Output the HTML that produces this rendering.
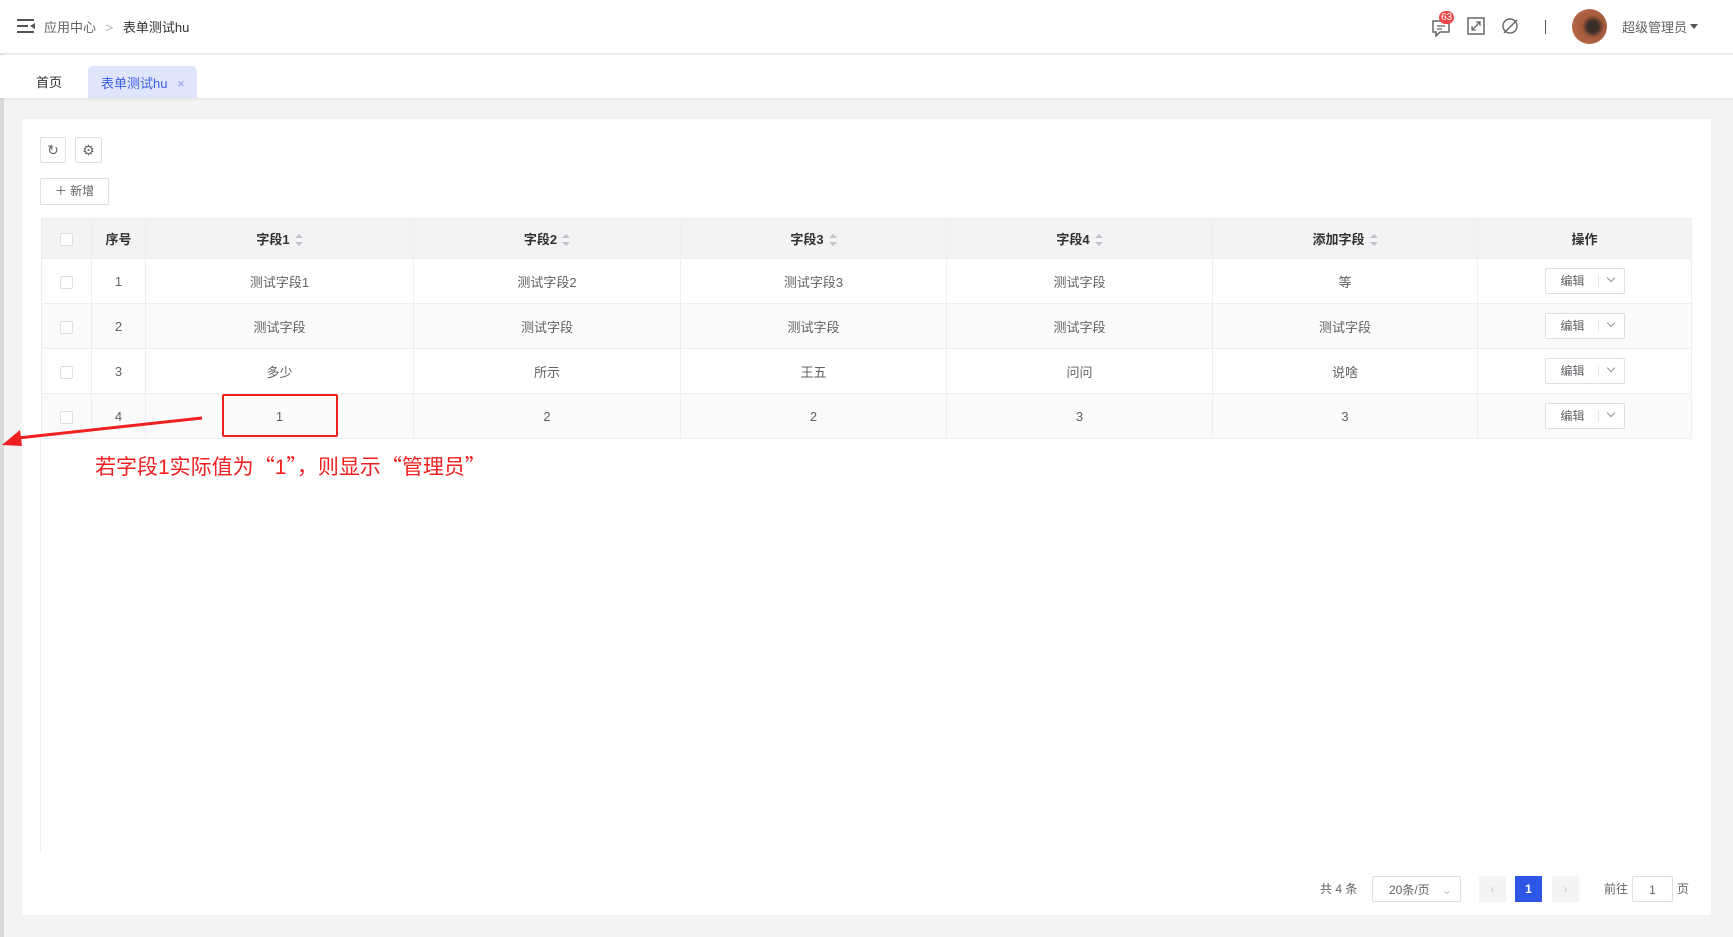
<!DOCTYPE html>
<html><head><meta charset="utf-8"><style>
*{box-sizing:border-box;margin:0;padding:0}
body{width:1733px;height:937px;background:#f3f3f3;font-family:"Liberation Sans","Noto Sans CJK SC",sans-serif;font-size:13px;color:#606266;position:relative;overflow:hidden}
.abs{position:absolute}
.hdr{left:0;top:0;width:1733px;height:54px;background:#fff;border-bottom:1px solid #e6e6e6}
.tabs{left:0;top:55px;width:1733px;height:43px;background:#fff;box-shadow:0 1px 3px rgba(0,0,0,.08)}
.card{left:22px;top:119px;width:1689px;height:796px;background:#fff}
.btn{border:1px solid #dcdfe6;background:#fff;border-radius:2px}
table{border-collapse:collapse;position:absolute;left:41px;top:218px;width:1651px;table-layout:fixed}
td,th{border:1px solid #ebeef5;text-align:center;height:45px;font-weight:normal}
th{background:#f3f3f4;height:40px;color:#303133;font-weight:bold}
tr:nth-child(odd) td{background:#fafafa}
.cb{display:inline-block;width:13px;height:13px;border:1px solid #dcdfe6;background:#fff;border-radius:2px;vertical-align:middle}
.sort{display:inline-block;width:8px;height:12px;vertical-align:middle;margin-left:5px;position:relative;top:-1px}
.sort:before,.sort:after{content:"";position:absolute;left:0;border-left:4px solid transparent;border-right:4px solid transparent}
.sort:before{top:0;border-bottom:4px solid #c0c4cc}
.sort:after{bottom:0;border-top:4px solid #c0c4cc}
.ed{display:inline-block;width:80px;height:26px;border:1px solid #dcdfe6;border-radius:2px;background:#fff;position:relative;vertical-align:middle;text-align:left;font-size:12px;line-height:24px;color:#606266}
.ed span{position:absolute;left:15px}
.ed i{position:absolute;left:52px;top:6px;height:12px;border-left:1px solid #e4e7ed}
.ed b{position:absolute;left:62px;top:6px;width:6px;height:6px;border-right:1px solid #909399;border-bottom:1px solid #909399;transform:rotate(45deg)}
.pg{height:26px;line-height:26px;font-size:12px}
</style></head><body>
<div class="abs" style="left:0;top:0;width:4px;height:937px;background:#d8d8d8"></div>
<div class="abs hdr">
 <svg class="abs" style="left:17px;top:18px" width="19" height="16"><rect x="0" y="1" width="17" height="2" fill="#555"/><rect x="0" y="7" width="11" height="2" fill="#555"/><rect x="0" y="13" width="17" height="2" fill="#555"/><path d="M18 5 L13 8 L18 11Z" fill="#555"/></svg>
 <div class="abs" style="left:44px;top:17px;color:#606266">应用中心 <span style="color:#aaa;margin:0 6px">&gt;</span> <span style="color:#303133">表单测试hu</span></div>
 <svg class="abs" style="left:1431px;top:16px" width="22" height="22"><path d="M2 5h16v11h-9l-4 4v-4h-3z" fill="none" stroke="#666" stroke-width="1.5"/><path d="M6 10h8M6 13h5" stroke="#666" stroke-width="1.3"/></svg>
 <div class="abs" style="left:1439px;top:11px;width:15px;height:13px;border-radius:7px;background:#f04848;color:#fff;font-size:10px;line-height:13px;text-align:center">63</div>
 <svg class="abs" style="left:1467px;top:17px" width="18" height="18"><rect x="1" y="1" width="16" height="16" fill="none" stroke="#666" stroke-width="1.5"/><path d="M5 13l8-8M9 5h4v4M5 9v4h4" fill="none" stroke="#666" stroke-width="1.3"/></svg>
 <svg class="abs" style="left:1501px;top:17px" width="18" height="18"><circle cx="9" cy="9" r="7" fill="none" stroke="#666" stroke-width="1.4"/><path d="M3 16L16 3" stroke="#666" stroke-width="1.4"/></svg>
 <div class="abs" style="left:1545px;top:20px;width:1px;height:14px;background:#555"></div>
 <div class="abs" style="left:1572px;top:9px;width:35px;height:35px;border-radius:50%;background:radial-gradient(circle at 60% 50%,#3a2c28 0 20%,#a55a3c 40%,#c07050)"></div>
 <div class="abs" style="left:1622px;top:17px;color:#606266">超级管理员</div>
 <div class="abs" style="left:1690px;top:24px;border-left:4px solid transparent;border-right:4px solid transparent;border-top:5px solid #555"></div>
</div>
<div class="abs tabs">
 <div class="abs" style="left:36px;top:17px;color:#303133">首页</div>
 <div class="abs" style="left:88px;top:11px;width:109px;height:32px;background:#dfe5fb;border-radius:5px 5px 0 0;color:#3f5fe0;padding:7px 0 0 13px">表单测试hu <span style="color:#8a9ae8;margin-left:6px">×</span></div>
</div>
<div class="abs card"></div>
<div class="abs btn" style="left:40px;top:137px;width:26px;height:26px;text-align:center;line-height:24px;color:#666;font-size:14px">↻</div>
<div class="abs btn" style="left:75px;top:137px;width:27px;height:26px;text-align:center;line-height:24px;color:#666;font-size:14px">⚙</div>
<div class="abs btn" style="left:40px;top:178px;width:69px;height:27px;text-align:center;line-height:25px;font-size:12px;color:#606266">＋ 新增</div>
<div class="abs" style="left:40px;top:438px;width:1px;height:415px;background:#ebeef5"></div>
<table>
<colgroup><col style="width:50px"><col style="width:54px"><col style="width:268px"><col style="width:267px"><col style="width:266px"><col style="width:266px"><col style="width:265px"><col></colgroup>
<tr><th><span class="cb"></span></th><th>序号</th><th>字段1<span class="sort"></span></th><th>字段2<span class="sort"></span></th><th>字段3<span class="sort"></span></th><th>字段4<span class="sort"></span></th><th>添加字段<span class="sort"></span></th><th>操作</th></tr>
<tr><td><span class="cb"></span></td><td>1</td><td>测试字段1</td><td>测试字段2</td><td>测试字段3</td><td>测试字段</td><td>等</td><td><span class="ed"><span>编辑</span><i></i><b></b></span></td></tr>
<tr><td><span class="cb"></span></td><td>2</td><td>测试字段</td><td>测试字段</td><td>测试字段</td><td>测试字段</td><td>测试字段</td><td><span class="ed"><span>编辑</span><i></i><b></b></span></td></tr>
<tr><td><span class="cb"></span></td><td>3</td><td>多少</td><td>所示</td><td>王五</td><td>问问</td><td>说啥</td><td><span class="ed"><span>编辑</span><i></i><b></b></span></td></tr>
<tr><td><span class="cb"></span></td><td>4</td><td>1</td><td>2</td><td>2</td><td>3</td><td>3</td><td><span class="ed"><span>编辑</span><i></i><b></b></span></td></tr>
</table>
<div class="abs" style="left:222px;top:394px;width:116px;height:43px;border:2px solid #f02020;border-radius:2px"></div>
<svg class="abs" style="left:0;top:405px" width="210" height="50"><path d="M202 13 L18 33" stroke="#f02020" stroke-width="3"/><path d="M2 40 L20 25 L22 41Z" fill="#f02020"/></svg>
<div class="abs" style="left:95px;top:451px;color:#f02020;font-size:21px;white-space:nowrap">若字段1实际值为<span style="font-family:'Noto Sans CJK SC',sans-serif">“</span>1<span style="font-family:'Noto Sans CJK SC',sans-serif">”，</span>则显示<span style="font-family:'Noto Sans CJK SC',sans-serif">“</span>管理员<span style="font-family:'Noto Sans CJK SC',sans-serif">”</span></div>
<div class="abs pg" style="left:1320px;top:876px;color:#606266">共 4 条</div>
<div class="abs pg btn" style="left:1372px;top:876px;width:89px;padding-left:16px;color:#606266">20条/页<span style="position:absolute;right:8px;color:#c0c4cc">⌄</span></div>
<div class="abs pg" style="left:1479px;top:876px;width:27px;background:#f4f4f5;text-align:center;color:#c0c4cc">‹</div>
<div class="abs pg" style="left:1515px;top:876px;width:27px;background:#2d55e6;text-align:center;color:#fff;font-weight:bold">1</div>
<div class="abs pg" style="left:1552px;top:876px;width:27px;background:#f4f4f5;text-align:center;color:#c0c4cc">›</div>
<div class="abs pg" style="left:1604px;top:876px">前往</div>
<div class="abs pg btn" style="left:1632px;top:876px;width:41px;text-align:center">1</div>
<div class="abs pg" style="left:1677px;top:876px">页</div>
</body></html>
